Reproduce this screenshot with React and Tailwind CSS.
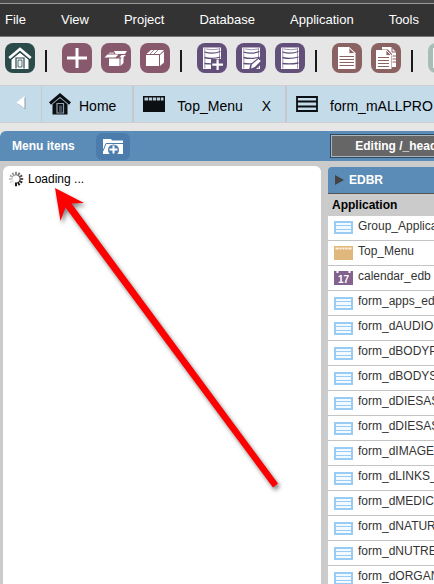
import React from "react";

const menus = ["File", "View", "Project", "Database", "Application", "Tools"];

const applications = [
  { type: "form", name: "Group_Applica" },
  { type: "menu", name: "Top_Menu" },
  { type: "calendar", name: "calendar_edb" },
  { type: "form", name: "form_apps_ed" },
  { type: "form", name: "form_dAUDIO" },
  { type: "form", name: "form_dBODYP" },
  { type: "form", name: "form_dBODYS" },
  { type: "form", name: "form_dDIESAS" },
  { type: "form", name: "form_dDIESAS" },
  { type: "form", name: "form_dIMAGE" },
  { type: "form", name: "form_dLINKS_" },
  { type: "form", name: "form_dMEDIC" },
  { type: "form", name: "form_dNATUR" },
  { type: "form", name: "form_dNUTRE" },
  { type: "form", name: "form_dORGAN" },
];

const HomeGlyph = () => (
  <svg width="30" height="30" viewBox="0 0 30 30">
    <path d="M6.500 15.500 15 9l8.500 6.500V26h-17z" fill="#fff" />
    <path d="M4.500 17.500 15 9l10.500 8.500" fill="none" stroke="#2b4a4a" strokeWidth="1.200" />
    <path d="m4.200 15 10.800-9 10.800 9" fill="none" stroke="#fff" strokeWidth="2.600" />
    <path d="M11 25.500V15h8v10.500" fill="none" stroke="#2b4a4a" strokeWidth="1.200" />
    <path d="M13 17h4v7h-4z" fill="#eef2f2" stroke="#2b4a4a" strokeWidth=".8" />
  </svg>
);

const PlusGlyph = () => (
  <svg width="30" height="30" viewBox="0 0 30 30">
    <path d="M13.500 5h3v8.500H25v3h-8.500V25h-3v-8.500H5v-3h8.500z" fill="#fff" />
  </svg>
);

const OpenBoxGlyph = () => (
  <svg width="30" height="30" viewBox="0 0 30 30" fill="#fff">
    <path d="M8 15.500h10.500V23H8z" />
    <path d="m19.500 16 3-3.500V20l-3 3z" />
    <path d="M3.500 14.500 6.500 11.500h11l-3 3z" />
    <path d="M13 8h13l-2 3H14.500z" />
    <path d="M18.500 14.500 20.500 12h4.500l-3 2.500z" />
    <path d="M8.500 9.500h4.500v1.200H7.500z" opacity=".7" />
  </svg>
);

const BoxGlyph = () => (
  <svg width="30" height="30" viewBox="0 0 30 30" fill="#fff">
    <path d="M6 12h13v11H6z" />
    <path d="m20 12 4-3.500v11L20 23z" />
    <path d="M6.500 11 11 7h13l-4 4z" />
    <path d="m10 11 4-4M14 11l4-4" stroke="#88596d" strokeWidth=".8" />
  </svg>
);

const ServerGlyph = ({ badge }) => (
  <svg width="30" height="30" viewBox="0 0 30 30">
    <path d="M6 4.500h18V26H6z" fill="#fff" />
    <path
      d="M7.500 9q8 2.500 16-.5M7.500 14.500q8 2 16-.5M7.500 20.500q8 1 16-.5"
      stroke="#62507b"
      strokeWidth="1.300"
      fill="none"
    />
    <path d="M7.800 5v20.500M22.500 5v20.500" stroke="#62507b" strokeWidth=".6" />
    <path d="M9 6q7 1.500 13 0" stroke="#8a7aa0" strokeWidth=".8" fill="none" />
    {badge === "plus" && (
      <>
        <path d="M14 16h13v11H14z" fill="#62507b" />
        <path d="M19.500 16.500h2.200v4H26v2.200h-4.300V27h-2.200v-4.300h-4.200v-2.200h4.200z" fill="#fff" />
      </>
    )}
    {badge === "pen" && (
      <>
        <path d="m13 27 1.500-6 8-6.500H27v5L19 27z" fill="#62507b" />
        <path d="m15 25.500 1-4 6.500-5.500 2.300 2-6 6z" fill="#fff" />
      </>
    )}
  </svg>
);

const PageGlyph = () => (
  <svg width="30" height="30" viewBox="0 0 30 30">
    <path d="M6 4h11l6.500 6v16H6z" fill="#fff" />
    <path d="M17 4.500v6h6z" fill="#8a6262" stroke="#fff" strokeWidth=".8" />
    <path d="M7.500 13.500H22M7.500 16.500H22M7.500 19.500H22M7.500 22.500H22" stroke="#8a6262" />
  </svg>
);

const PagesGlyph = () => (
  <svg width="30" height="30" viewBox="0 0 30 30">
    <path d="M11 4h9l5 5v15h-4V11l-4-4.500h-6z" fill="#fff" />
    <path d="M21 5v4h4M21.500 13H25M21.500 16H25M21.500 19H25" stroke="#8a6262" fill="none" />
    <path d="M5 7h10.500l5 5v14H5z" fill="#fff" />
    <path d="M15 7v5.500h5.500z" fill="#8a6262" stroke="#fff" strokeWidth=".8" />
    <path d="M7 14.500h11M7 17.500h11M7 20.500h11M7 23.500h11" stroke="#8a6262" />
  </svg>
);

const GridGlyph = () => (
  <svg width="30" height="30" viewBox="0 0 30 30">
    <path d="M5 5h20v20H5z" fill="#f1f5f4" />
  </svg>
);

const toolbarGroups = [
  [{ label: "Home", color: "bg-[#2b4a4a]", glyph: <HomeGlyph /> }],
  [
    { label: "New", color: "bg-[#88596d]", glyph: <PlusGlyph /> },
    { label: "Open project", color: "bg-[#88596d]", glyph: <OpenBoxGlyph /> },
    { label: "Close project", color: "bg-[#88596d]", glyph: <BoxGlyph /> },
  ],
  [
    { label: "New connection", color: "bg-[#62507b]", glyph: <ServerGlyph badge="plus" /> },
    { label: "Edit connection", color: "bg-[#62507b]", glyph: <ServerGlyph badge="pen" /> },
    { label: "Connections", color: "bg-[#62507b]", glyph: <ServerGlyph /> },
  ],
  [
    { label: "New application", color: "bg-[#8a6262]", glyph: <PageGlyph /> },
    { label: "Copy application", color: "bg-[#8a6262]", glyph: <PagesGlyph /> },
  ],
  [{ label: "Grid", color: "bg-[#a9bdb7]", glyph: <GridGlyph /> }],
];

const TabHomeIcon = () => (
  <svg width="22" height="22" viewBox="0 0 22 22" className="shrink-0">
    <path d="M3.500 11 11 5l7.500 6v10.500h-15z" fill="#0c0f12" />
    <path d="M1 10.500 11 2l10 8.500" fill="none" stroke="#0c0f12" strokeWidth="3" />
    <path d="M2 12 11 4.500l9 7.500" fill="none" stroke="#8fa2b0" strokeWidth=".7" />
    <path d="M8 10.500h6.500V20H8z" fill="none" stroke="#8fa2b0" strokeWidth="1.200" />
    <path d="M10 12.500h3V19h-3z" fill="#41505c" />
  </svg>
);

const TabMenuIcon = () => (
  <svg width="22" height="16" viewBox="0 0 22 16" className="shrink-0">
    <path d="M0 0h22v16H0z" fill="#0c0f12" />
    <path d="M1.500 1.500h19v3h-19z" fill="#b9ccd9" />
    <path d="M5.500 1v4M9.500 1v4M13.500 1v4M17.500 1v4" stroke="#0c0f12" strokeWidth=".8" />
  </svg>
);

const TabFormIcon = () => (
  <svg width="22" height="16" viewBox="0 0 22 16" className="shrink-0">
    <path d="M1 1h20v14H1zM1 5.500h20M1 10.500h20" fill="none" stroke="#0c0f12" strokeWidth="1.800" />
  </svg>
);

const AppIcon = ({ type }) => {
  if (type === "menu") {
    return (
      <svg width="19" height="14" viewBox="0 0 19 14" className="block">
        <path d="M0 0h19v14H0z" fill="#e0b87e" />
        <path d="M1.500 1.500h16v2h-16z" fill="#fdf3e0" />
        <path d="M5 1v3M8 1v3M11 1v3M14 1v3" stroke="#e0b87e" strokeWidth=".8" />
      </svg>
    );
  }
  if (type === "calendar") {
    return (
      <svg width="19" height="14" viewBox="0 0 19 14" className="block">
        <path d="M0 0h19v14H0z" fill="#84628f" />
        <path d="M2.500 0h2v2h-2zM14.500 0h2v2h-2z" fill="#fff" />
        <text
          x="9.500"
          y="12"
          textAnchor="middle"
          fontFamily="Liberation Sans, sans-serif"
          fontSize="10"
          fontWeight="bold"
          fill="#fff"
        >
          17
        </text>
      </svg>
    );
  }
  return (
    <svg width="19" height="13" viewBox="0 0 19 13" className="block">
      <path d="M1 1h17v11H1z" fill="#f3faff" stroke="#99ccf5" strokeWidth="2" />
      <path d="M1 4.500h17M1 8.500h17" stroke="#99ccf5" strokeWidth="1" />
    </svg>
  );
};

const Spinner = () => (
  <svg width="16" height="16" viewBox="0 0 16 16" stroke="#000" strokeWidth="1.800">
    {[0, 1, 2, 3, 4, 5, 6, 7, 8, 9, 10, 11].map((i) => (
      <path
        key={i}
        d="M8 4.500V.8"
        transform={`rotate(${180 - i * 30} 8 8)`}
        opacity={1 - i * 0.085}
      />
    ))}
  </svg>
);

const App = () => {
  return (
    <div className="flex h-screen flex-col overflow-hidden bg-[#e6e6e6] font-['Liberation_Sans',Arial,sans-serif] text-xs text-black">
      <header className="border-t-3 border-[#484848]">
        <nav className="flex h-[34px] items-center gap-[35px] border-t border-b border-t-[#999] border-b-[#777] bg-[#333] pl-[5px] text-[13px] text-white">
          {menus.map((menu) => (
            <button key={menu}>{menu}</button>
          ))}
        </nav>
      </header>

      <div className="flex h-12 shrink-0 items-start pt-1.5 pl-[5px]">
        {toolbarGroups.map((group, idx) => (
          <React.Fragment key={idx}>
            {idx > 0 && (
              <div className="mt-[7px] mr-[15px] ml-[10px] h-[22px] w-0.5 shrink-0 bg-[#1a1a1a]" />
            )}
            <div className="flex shrink-0 gap-[9px]">
              {group.map((tool) => (
                <button
                  key={tool.label}
                  aria-label={tool.label}
                  className={`size-[30px] overflow-hidden rounded-lg ${tool.color}`}
                >
                  {tool.glyph}
                </button>
              ))}
            </div>
          </React.Fragment>
        ))}
      </div>

      <div className="flex h-[38px] shrink-0 items-stretch overflow-hidden border-t border-b border-[#cfcfd2] bg-[#c4dbea] text-sm whitespace-nowrap">
        <button
          aria-label="Previous tabs"
          className="flex w-[42px] shrink-0 justify-center border-r border-[#c8c8cc] pt-2.5"
        >
          <svg width="10" height="14" viewBox="0 0 10 14">
            <path d="M9.500 1v12.500L2 8z" fill="#8d979e" />
            <path d="M8.500 0v12.500L.5 6.500z" fill="#fff" />
          </svg>
        </button>
        <div className="flex shrink-0 items-center gap-2 border-r-2 border-[#c8c8cc] pr-4 pl-[7px]">
          <TabHomeIcon />
          <button className="pt-1">Home</button>
        </div>
        <div className="flex shrink-0 items-center border-r-2 border-[#c8c8cc] pr-[14px] pl-[9px]">
          <TabMenuIcon />
          <button className="pt-1 pl-3">Top_Menu</button>
          <button aria-label="Close Top_Menu" className="pt-1 pl-[19px]">
            X
          </button>
        </div>
        <div className="flex shrink-0 items-center gap-3 pl-[9px]">
          <TabFormIcon />
          <button className="pt-1">form_mALLPRO</button>
        </div>
      </div>

      <div className="mt-2 flex h-[30px] shrink-0 items-center gap-[7px] rounded-tl-md bg-[#5b8cb7] pl-[3px] font-bold text-white">
        <div className="flex min-w-0 flex-3 items-center gap-[21px] pl-[9px]">
          <h2>Menu itens</h2>
          <button
            aria-label="New item"
            className="flex h-[27px] w-[34px] items-center justify-center rounded-md bg-[#4b7cab]"
          >
            <svg width="20" height="15" viewBox="0 0 20 15">
              <path d="M0 0h8l1 1.500h11V15H0z" fill="#fff" />
              <path d="M3 4.500h17M3 4.500 0 12" stroke="#4b7cab" fill="none" />
              <circle cx="10.500" cy="11" r="5.500" fill="#4b7cab" />
              <path d="M10.500 6.500v8M6.500 10.500h8" stroke="#fff" strokeWidth="2" />
            </svg>
          </button>
        </div>
        <div className="min-w-0 flex-1">
          <button className="h-6 w-full border border-r-0 border-[#2e4a63] bg-[#666] text-left whitespace-nowrap">
            <span className="flex h-full items-center border border-r-0 border-[#aab4bd] pl-[23px]">
              Editing /_head
            </span>
          </button>
        </div>
      </div>

      <main className="flex min-h-0 flex-1 gap-[7px] bg-[#cbcbcb] pl-[3px]">
        <section className="relative mt-[5px] min-w-0 flex-3 rounded-t-md bg-white">
          <p className="flex items-center gap-1 pt-[5px] pl-[5px]">
            <Spinner />
            Loading ...
          </p>
          {/* pointer drawn over the loading panel */}
          <svg
            className="pointer-events-none absolute top-4 left-[45px] drop-shadow-[2px_3px_2px_rgba(0,0,0,0.5)]"
            width="240"
            height="320"
            viewBox="48 182 240 320"
          >
            <path d="M55 188 84 203l-12.500 0.500L278 483.500l-5 4L65.500 207.500 60.500 221z" fill="#fd0000" />
          </svg>
        </section>

        <section className="mt-1.5 min-w-0 flex-1 overflow-hidden">
          <button className="flex h-[26px] w-full items-center gap-1 rounded-tl-sm bg-[#5b8cb7] pl-1.5 font-bold text-white">
            <svg width="11" height="10" viewBox="0 0 11 10">
              <path d="M1 0v10l9-5z" fill="#444" />
            </svg>
            EDBR
          </button>
          <table className="w-full table-fixed border-collapse bg-white whitespace-nowrap text-[#333]">
            <colgroup>
              <col className="w-[30px]" />
              <col />
            </colgroup>
            <thead>
              <tr className="h-[22px] border-t border-[#555] bg-[#cbcbcb] text-left text-black">
                <th colSpan="2" className="pl-1">
                  Application
                </th>
              </tr>
            </thead>
            <tbody>
              {applications.map((app, idx) => (
                <tr key={idx} className="h-[25px] border-b border-[#c4c4c4]">
                  <td className="pl-1.5">
                    <AppIcon type={app.type} />
                  </td>
                  <td className="p-0 pb-1">{app.name}</td>
                </tr>
              ))}
            </tbody>
          </table>
        </section>
      </main>
    </div>
  );
};

export default App;
